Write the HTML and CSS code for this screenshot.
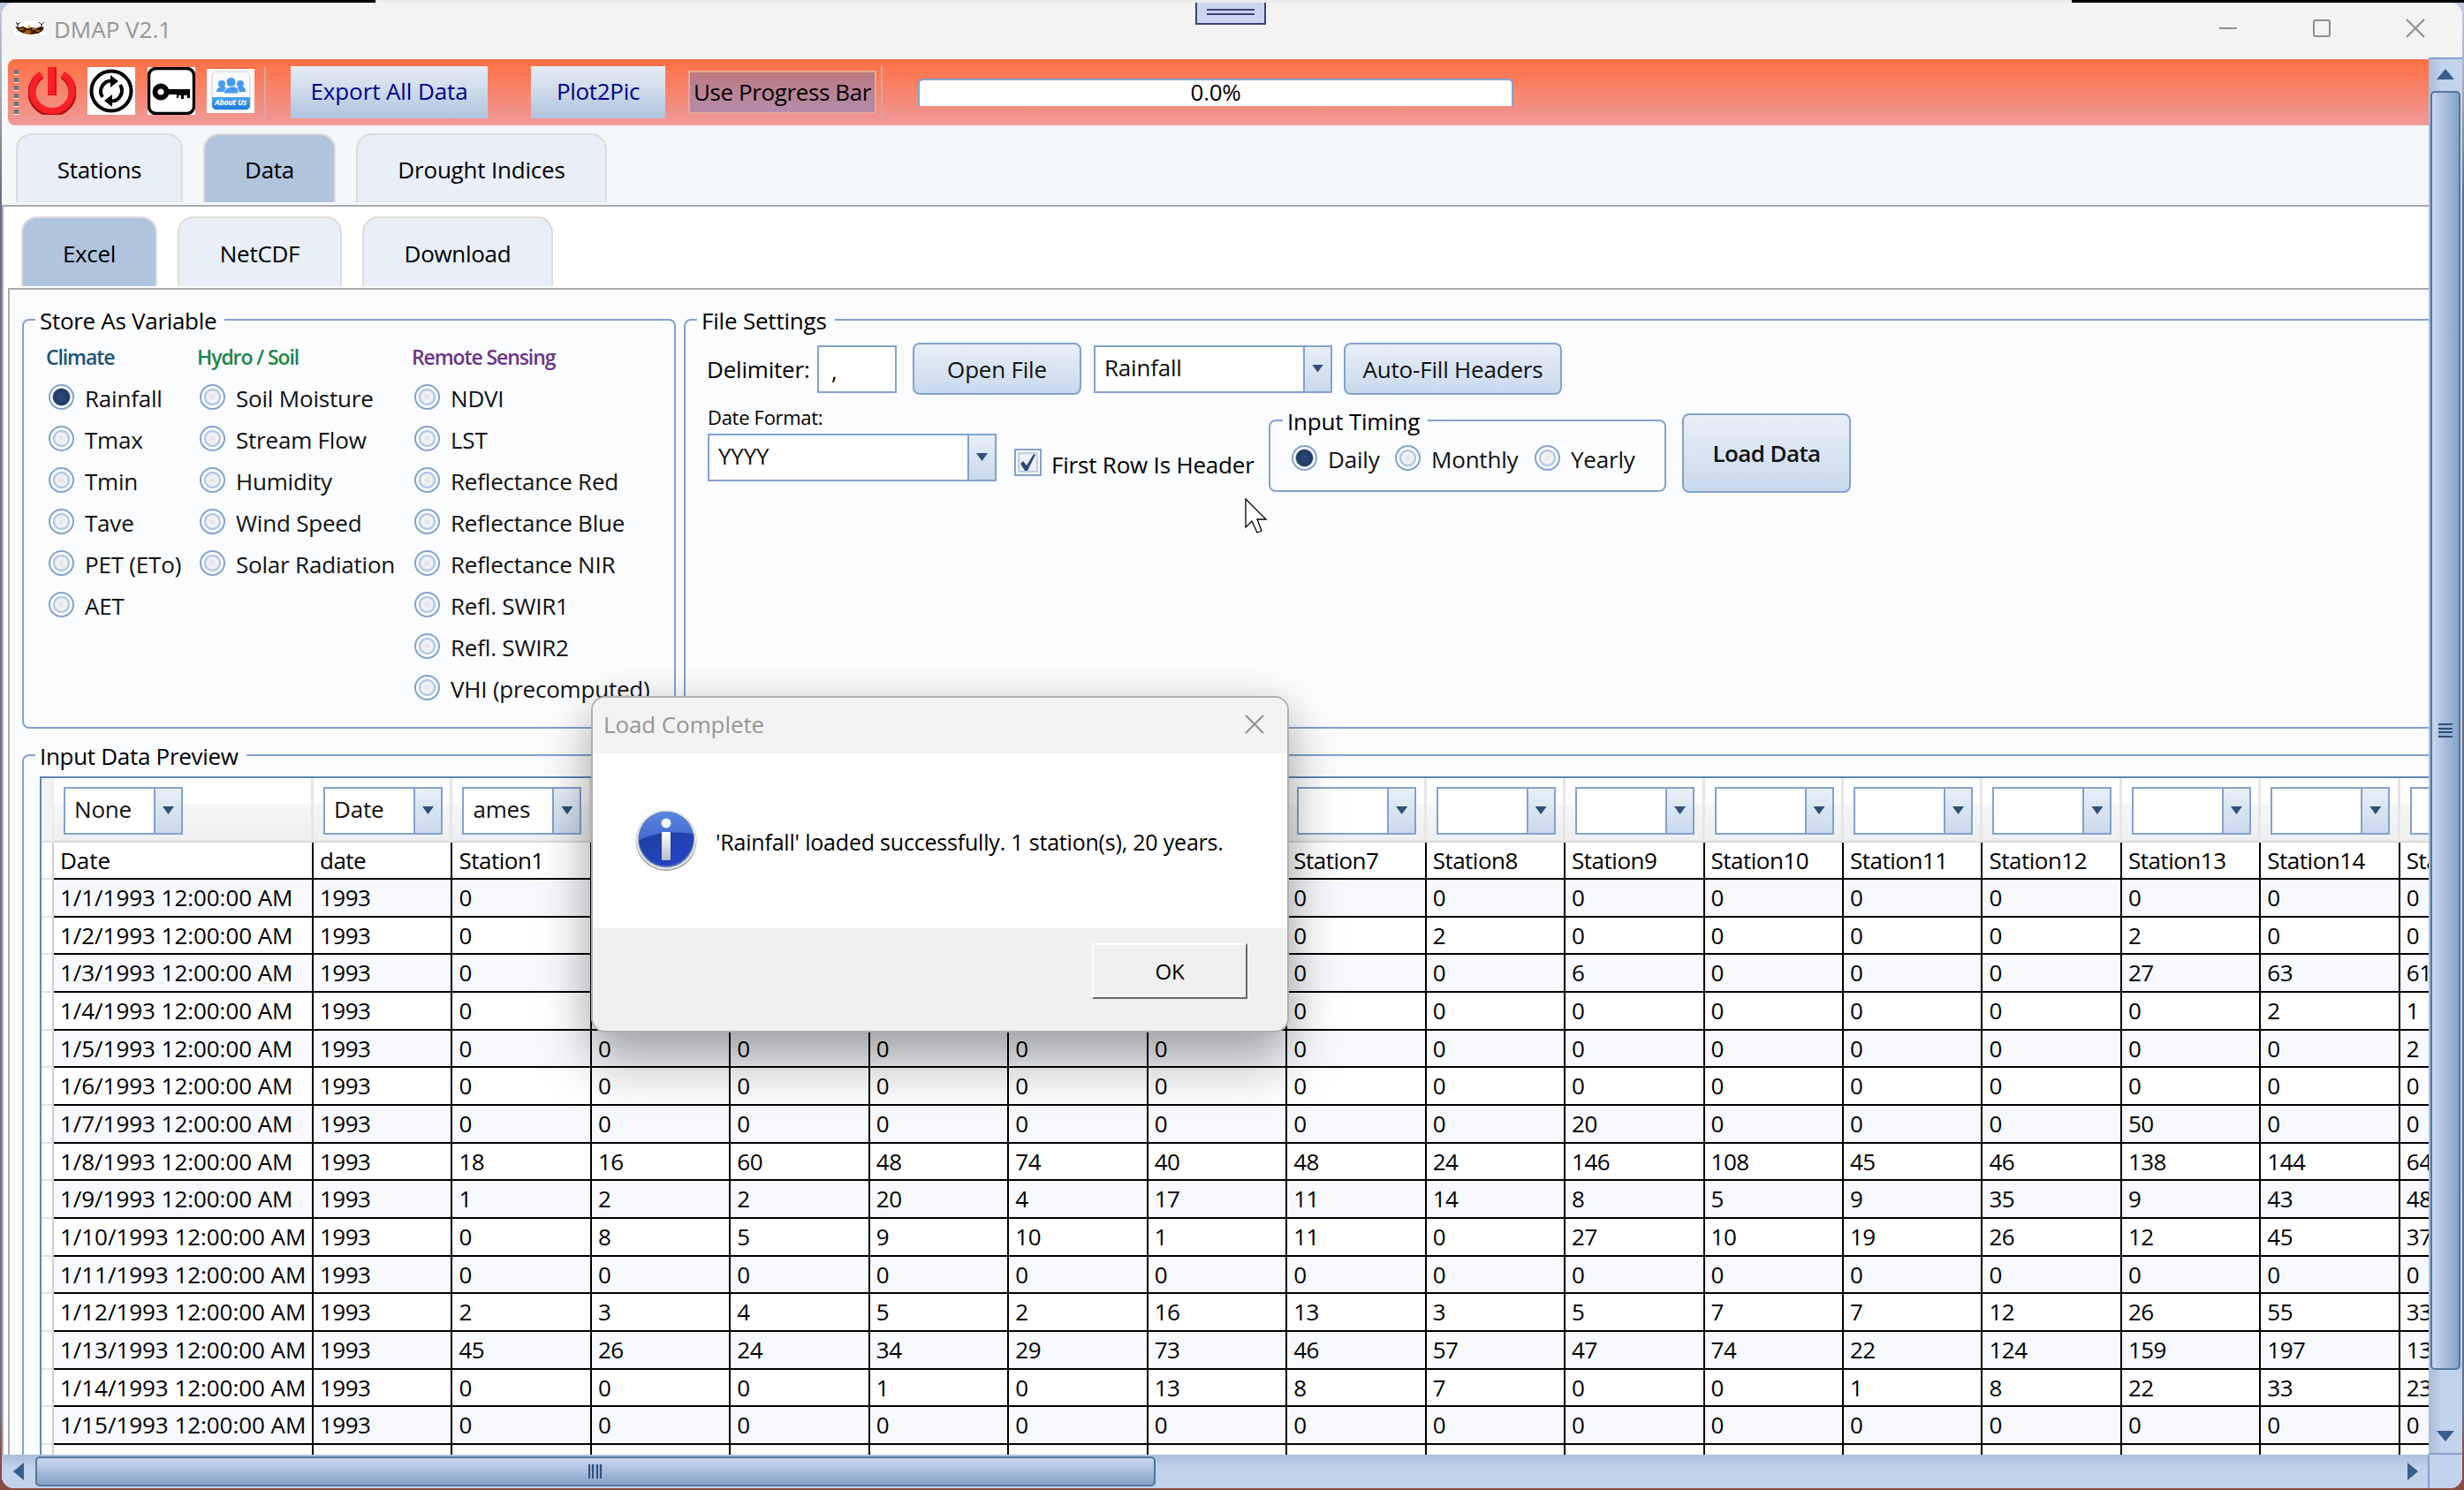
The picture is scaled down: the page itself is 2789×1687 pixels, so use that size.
FILE: index.html
```
<!DOCTYPE html>
<html>
	<head>
		<meta charset="utf-8" />
		<title>DMAP V2.1</title>
		<link rel="stylesheet" href="styles.css">
		<script src="table.js"></script>
	</head>
	<body>
		<div class="desktop-top"></div>
		<div class="window">
			<div class="titlebar">
				<svg class="app-icon" viewBox="0 0 36 16">
					<rect width="36" height="16" fill="#fff"/>
					<path d="M1 6l5 1 4-1 5 2 5-1 5 1 5-2 4 1-2 4-5 3-8 1-8-1-6-3z" fill="#3a1d06"/>
					<path d="M6 9h5M13 11h6M20 9h5M25 11h4M11 13h8" stroke="#c86f1c" stroke-width="1.6"/>
					<path d="M4 8V2M2 1l2 3 3-3M31 8V3M28 1l3 3 3-3" stroke="#2a1a10" fill="none"/>
					<circle cx="17" cy="6" r="1.6" fill="#f0a51e"/>
				</svg>
				<span class="title">DMAP V2.1</span>
				<div class="win-btns">
					<svg viewBox="0 0 22 22"><path d="M1 11h20"/></svg>
					<svg viewBox="0 0 22 22"><rect x="2" y="2" width="18" height="18" rx="2"/></svg>
					<svg viewBox="0 0 22 22"><path d="M1 1l20 20M21 1L1 21"/></svg>
				</div>
			</div>

			<div class="main">
				<div class="client">
					<div class="toolbar">
						<div class="grip"></div>
						<svg class="ico power" viewBox="0 0 54 54">
							<path d="M15 9A23 23 0 1 0 39 9" fill="none" stroke="#b51218" stroke-width="9"/>
							<path d="M15 8A22.500 22.500 0 1 0 39 8" fill="none" stroke="#fb2026" stroke-width="7"/>
							<rect x="22" y="0" width="10" height="32" fill="#d5141b"/>
							<rect x="22" y="0" width="8" height="31" fill="#fb2026"/>
						</svg>
						<svg class="ico refresh" viewBox="0 0 54 54">
							<rect width="54" height="54" fill="#fff"/>
							<circle cx="27" cy="27" r="22.500" fill="none" stroke="#000" stroke-width="4"/>
							<path d="M17 34A12 12 0 0 1 27 15.500M37 20A12 12 0 0 1 27 38.500" fill="none" stroke="#000" stroke-width="4"/>
							<path d="M26 9l9 7-9 7zM28 31l-9 7 9 7z"/>
						</svg>
						<svg class="ico key" viewBox="0 0 54 54">
							<rect width="54" height="54" fill="#fff"/>
							<rect x="1.500" y="1.500" width="51" height="51" rx="8" fill="#fff" stroke="#000" stroke-width="3.500"/>
							<circle cx="15" cy="28" r="6.500" fill="none" stroke="#000" stroke-width="6"/>
							<path d="M22 25h26v10h-3v-3h-4v4h-3v-4h-3v3h-2v-4H22z"/>
						</svg>
						<svg class="ico about" viewBox="0 0 54 50">
							<defs>
								<linearGradient id="ab" x1="0" y1="0" x2="0" y2="1">
									<stop offset="0" stop-color="#4ea3f2"/>
									<stop offset="1" stop-color="#1a7ce0"/>
								</linearGradient>
							</defs>
							<rect width="54" height="50" fill="#fff"/>
							<rect x="6" y="3" width="43" height="43" rx="5" fill="#f8fafc" stroke="#c8ccd2"/>
							<path d="M6 32h43v9q0 5-5 5H11q-5 0-5-5z" fill="url(#ab)"/>
							<g fill="#469af0">
								<circle cx="17" cy="17" r="4"/><circle cx="38" cy="17" r="4"/>
								<path d="M11 26q0-5 6-6t6 6zM32 26q0-5 6-6t6 6z"/>
								<circle cx="27.500" cy="15" r="5.500" stroke="#f8fafc"/>
								<path d="M19 28q0-6 8.500-8t8.500 8z" stroke="#f8fafc"/>
							</g>
							<text x="27" y="41" class="about-txt">About Us</text>
						</svg>
						<i class="sep sep1"></i>
						<button class="tool-btn export">Export All Data</button>
						<button class="tool-btn plot">Plot2Pic</button>
						<button class="toggle">Use Progress Bar</button>
						<i class="sep sep2"></i>
						<div class="progress">0.0%</div>
					</div>

					<div class="tabs tabs-outer">
						<div class="tab t-stations">Stations</div>
						<div class="tab t-data active">Data</div>
						<div class="tab t-drought">Drought Indices</div>
					</div>

					<div class="panel outer">
						<div class="tabs tabs-inner">
							<div class="tab t-excel active">Excel</div>
							<div class="tab t-netcdf">NetCDF</div>
							<div class="tab t-download">Download</div>
						</div>
						<div class="panel inner">
							<div class="groups">
								<fieldset class="store">
									<legend>Store As Variable</legend>
									<div class="vars">
										<div class="col">
											<h4 class="climate">Climate</h4>
											<label><i class="radio on"></i>Rainfall</label>
											<label><i class="radio"></i>Tmax</label>
											<label><i class="radio"></i>Tmin</label>
											<label><i class="radio"></i>Tave</label>
											<label><i class="radio"></i>PET (ETo)</label>
											<label><i class="radio"></i>AET</label>
										</div>
										<div class="col">
											<h4 class="hydro">Hydro / Soil</h4>
											<label><i class="radio"></i>Soil Moisture</label>
											<label><i class="radio"></i>Stream Flow</label>
											<label><i class="radio"></i>Humidity</label>
											<label><i class="radio"></i>Wind Speed</label>
											<label><i class="radio"></i>Solar Radiation</label>
										</div>
										<div class="col">
											<h4 class="remote">Remote Sensing</h4>
											<label><i class="radio"></i>NDVI</label>
											<label><i class="radio"></i>LST</label>
											<label><i class="radio"></i>Reflectance Red</label>
											<label><i class="radio"></i>Reflectance Blue</label>
											<label><i class="radio"></i>Reflectance NIR</label>
											<label><i class="radio"></i>Refl. SWIR1</label>
											<label><i class="radio"></i>Refl. SWIR2</label>
											<label><i class="radio"></i>VHI (precomputed)</label>
										</div>
									</div>
								</fieldset>

								<fieldset class="settings">
									<legend>File Settings</legend>
									<div class="row1">
										<span class="delim-label">Delimiter:</span>
										<div class="textbox">,</div>
										<button class="btn open">Open File</button>
										<div class="combo var-combo"><span>Rainfall</span><b></b></div>
										<button class="btn autofill">Auto-Fill Headers</button>
									</div>
									<div class="row2">
										<div class="date-format">
											<span>Date Format:</span>
											<div class="combo"><span>YYYY</span><b></b></div>
										</div>
										<div class="check">
											<svg viewBox="0 0 31 31">
												<rect x="1" y="1" width="29" height="29" fill="#fff" stroke="#84a2cb" stroke-width="2"/>
												<rect x="5" y="5" width="21" height="21" fill="#eef0f3" stroke="#bccfe8" stroke-width="2"/>
												<path d="M7 17l3-3 4 5 8-13 2 1-9 18h-3z" fill="#2b4a75"/>
											</svg>
											<span>First Row Is Header</span>
										</div>
										<fieldset class="timing">
											<legend>Input Timing</legend>
											<div class="timing-row">
												<label class="daily"><i class="radio on"></i>Daily</label>
												<label class="monthly"><i class="radio"></i>Monthly</label>
												<label class="yearly"><i class="radio"></i>Yearly</label>
											</div>
										</fieldset>
										<button class="btn load">Load Data</button>
									</div>
								</fieldset>
							</div>

							<fieldset class="preview">
								<legend>Input Data Preview</legend>
								<div class="grid" id="grid"></div>
							</fieldset>
						</div>
					</div>
				</div>

				<div class="vscroll">
					<i class="arrow up"></i>
					<div class="thumb"><i></i></div>
					<i class="arrow down"></i>
				</div>
			</div>

			<div class="hscroll">
				<i class="arrow left"></i>
				<div class="thumb"><i></i></div>
				<i class="arrow right"></i>
				<div class="corner"></div>
			</div>
		</div>

		<div class="dock"><i></i><i></i></div>

		<svg class="cursor" viewBox="0 0 26 42">
			<path d="M1 1v32l7-7 6 13 5-2-5-13h10z" fill="#fff" stroke="#000" stroke-width="1.300"/>
		</svg>

		<div class="dialog">
			<div class="dlg-head">
				<span>Load Complete</span>
				<svg viewBox="0 0 22 22"><path d="M1 1l20 20M21 1L1 21"/></svg>
			</div>
			<div class="dlg-body">
				<svg class="info" viewBox="0 0 72 72">
					<defs>
						<linearGradient id="g1" x1="0" y1="0" x2="0" y2="1">
							<stop offset="0" stop-color="#5b86e0"/>
							<stop offset="1" stop-color="#2b50c4"/>
						</linearGradient>
						<linearGradient id="g2" x1="0" y1="0" x2="1" y2="1">
							<stop offset="0" stop-color="#1e409c"/>
							<stop offset="1" stop-color="#2443cc"/>
						</linearGradient>
						<linearGradient id="g3" x1="0" y1="0" x2="0" y2="1">
							<stop offset="0" stop-color="#fff"/>
							<stop offset="1" stop-color="#b9bdc8"/>
						</linearGradient>
					</defs>
					<circle cx="36" cy="36.500" r="34.500" fill="#999"/>
					<circle cx="36" cy="35.500" r="34" fill="#ececec"/>
					<circle cx="36" cy="35.500" r="32" fill="#8b93a8"/>
					<circle cx="36" cy="35" r="31" fill="url(#g1)"/>
					<path d="M5 37Q26 24 67 29A31 31 0 1 1 5 37z" fill="url(#g2)"/>
					<circle cx="36" cy="17" r="5.500" fill="#f4f6fb"/>
					<rect x="31" y="27" width="10" height="32" rx="1" fill="url(#g3)"/>
				</svg>
				<span>'Rainfall' loaded successfully. 1 station(s), 20 years.</span>
			</div>
			<div class="dlg-foot"><button>OK</button></div>
		</div>

		<script>
			drawGrid(document.getElementById("grid"));
		</script>
	</body>
</html>
```
FILE: table.js
```
//first row holds the header names, the rest are daily values
//columns 2-6 of the first rows stay empty, the message box lies over them
var names = ["Station1","","","","","","Station7","Station8","Station9","Station10","Station11","Station12","Station13","Station14","Station15"];

var values = [
	["0","","","","","","0","0","0","0","0","0","0","0","0"],
	["0","","","","","","0","2","0","0","0","0","2","0","0"],
	["0","","","","","","0","0","6","0","0","0","27","63","61"],
	["0","","","","","","0","0","0","0","0","0","0","2","1"],
	[0,0,0,0,0,0,0,0,0,0,0,0,0,0,2],
	[0,0,0,0,0,0,0,0,0,0,0,0,0,0,0],
	[0,0,0,0,0,0,0,0,20,0,0,0,50,0,0],
	[18,16,60,48,74,40,48,24,146,108,45,46,138,144,64],
	[1,2,2,20,4,17,11,14,8,5,9,35,9,43,48],
	[0,8,5,9,10,1,11,0,27,10,19,26,12,45,37],
	[0,0,0,0,0,0,0,0,0,0,0,0,0,0,0],
	[2,3,4,5,2,16,13,3,5,7,7,12,26,55,33],
	[45,26,24,34,29,73,46,57,47,74,22,124,159,197,13],
	[0,0,0,1,0,13,8,7,0,0,1,8,22,33,23],
	[0,0,0,0,0,0,0,0,0,0,0,0,0,0,0]
];

function addRow(grid, cls, cells){
	var row = document.createElement("div");
	row.className = "grow " + cls;
	row.innerHTML = '<div class="rh"></div>';
	for( var i = 0; i < cells.length; i++ ){
		var cell = document.createElement("div");
		cell.className = "cell";
		cell.innerHTML = cells[i];
		row.appendChild(cell);
	}
	grid.appendChild(row);
}

function drawGrid(grid){
	var heads = ["None","Date","ames"];
	var combos = [];
	for( var i = 0; i < 17; i++ ){
		combos.push('<div class="combo"><span>' + (heads[i] || "") + '</span><b></b></div>');
	}
	addRow(grid, "ghead", combos);
	addRow(grid, "gnames", ["Date","date"].concat(names));

	for( var i = 0; i < values.length; i++ ){
		addRow(grid, i % 2 ? "" : "alt", ["1/" + (i+1) + "/1993 12:00:00 AM", "1993"].concat(values[i]));
	}

	var blank = [];
	for( var i = 0; i < 17; i++ ){
		blank.push("");
	}
	addRow(grid, "", blank);
}
```
FILE: styles.css
```
*{
	margin: 0;
	padding: 0;
	box-sizing: border-box;
}
body{
	width: 2789px;
	height: 1687px;
	overflow: hidden;
	position: relative;
	background: linear-gradient(#c3c9e4 0, #a9a9b5 100px, #6b6c86 220px, #6d6f88 1600px, #8b4a42 1650px, #8b4a42);
	color: #000;
	font: 26px/36px "Open Sans", "Noto Sans", sans-serif;
	letter-spacing: -0.3px;
	white-space: nowrap;
}
button{
	font: inherit;
	letter-spacing: inherit;
	color: inherit;
}
i, b{
	display: block;
	flex: none;
}
.desktop-top{
	height: 3px;
	background: linear-gradient(90deg, #000 425px, #ebebeb 425px, #ebebeb 2345px, #000 2345px);
}
.window{
	width: 2785px;
	height: 1682px;
	margin-left: 2px;
	border-radius: 14px;
	overflow: hidden;
	background: #f4f8fb;
}

/* title bar */
.titlebar{
	height: 62px;
	padding: 0 43px 0 14px;
	display: flex;
	align-items: center;
	background: #f3f3f3;
	color: #969696;
}
.app-icon{
	width: 36px;
	height: 16px;
	margin: -4px 9px 0 0;
}
.title{
	margin-top: -2px;
	letter-spacing: 0;
}
.win-btns{
	display: flex;
	gap: 84px;
	margin: -4px -1px 0 auto;
}
.win-btns svg, .dlg-head svg{
	width: 22px;
	height: 22px;
	fill: none;
	stroke: #8e8e8e;
	stroke-width: 2;
}

.main{
	display: flex;
	height: 1582px;
}
.client{
	width: 2747px;
	overflow: hidden;
}

/* toolbar */
.toolbar{
	height: 75px;
	margin: 2px 0 0 7px;
	padding-left: 7px;
	display: flex;
	align-items: center;
	border-radius: 8px 0 0 8px;
	background: linear-gradient(#ff7043, #ef9a9a);
}
.grip{
	width: 5px;
	height: 52px;
	background: repeating-linear-gradient(#6c7680 0, #6c7680 5px, #fff 5px, #fff 6px, transparent 6px, transparent 9px);
}
.ico{
	width: 54px;
	height: 54px;
	margin-top: -3px;
	flex: none;
}
.power{ margin-left: 11px; }
.refresh{ margin-left: 13px; }
.key{ margin-left: 14px; }
.about{ margin-left: 13px; height: 50px; }
.about-txt{
	font: italic bold 9px "Open Sans", sans-serif;
	text-anchor: middle;
	letter-spacing: -0.3px;
	fill: #fff;
}
.sep{
	width: 2px;
	height: 59px;
	background: #cfa9a8;
}
.sep1{ margin-left: 11px; }
.sep2{ margin-left: 5px; }
.tool-btn{
	height: 59px;
	padding-bottom: 3px;
	border: none;
	background: linear-gradient(#e6eef6, #b0c4de);
	color: #00008b;
}
.export{
	width: 223px;
	margin-left: 28px;
	letter-spacing: -0.1px;
}
.plot{
	width: 152px;
	margin-left: 49px;
}
.toggle{
	width: 213px;
	height: 49px;
	margin-left: 26px;
	padding-bottom: 2px;
	border: 2px solid #eaa898;
	background: linear-gradient(#bc7a80, #b58cab);
	letter-spacing: -0.4px;
}
.progress{
	width: 674px;
	height: 31px;
	margin: -1px 0 0 40px;
	border: 2px solid #84a2cb;
	border-width: 2px 2px 0;
	border-radius: 6px 6px 0 0;
	background: #fff;
	text-align: center;
	line-height: 27px;
}

/* tabs */
.tabs{
	display: flex;
	align-items: flex-end;
}
.tab{
	height: 78px;
	display: flex;
	align-items: center;
	justify-content: center;
	padding-top: 2px;
	border: 2px solid #dcdcdc;
	border-bottom: none;
	border-radius: 18px 18px 0 0;
	background: #e8eff7;
	margin-right: 23px;
}
.tab.active{
	background: #b0c4de;
}
.tabs-outer{
	margin-top: 9px;
	padding-left: 16px;
}
.t-stations{ width: 189px; }
.t-data{ width: 150px; }
.t-drought{ width: 284px; letter-spacing: -0.2px; }
.tabs-inner{
	padding: 11px 0 0 20px;
}
.t-excel{ width: 154px; }
.t-netcdf{ width: 186px; }
.t-download{ width: 216px; }
.tabs-inner .tab{ height: 79px; }

.panel{
	border-top: 2px solid #ababab;
	border-left: 2px solid #ababab;
}
.outer{
	height: 1420px;
	margin-top: 3px;
	background: #fff;
}
.inner{
	height: 1330px;
	margin: 2px 0 0 5px;
	padding: 16px 0 0 14px;
	background: #fafcfe;
}

/* group boxes */
fieldset{
	border: 2px solid #84a2cb;
	border-radius: 8px;
	padding: 0 0 0 13px;
	flex: none;
}
legend{
	height: 36px;
	padding: 1px 9px 0 5px;
}
.groups{
	display: flex;
	gap: 9px;
}
.store, .settings{
	height: 481px;
}
.store{ width: 740px; }
.settings{ width: 2100px; letter-spacing: -0.2px; }

.vars{
	display: grid;
	grid-template-columns: 171px 243px auto;
	padding: 8px 0 0 12px;
}
h4{
	height: 38px;
	font-size: 23px;
	font-weight: 600;
	line-height: 33px;
	letter-spacing: -1.1px;
}
.climate{ color: #1a5276; }
.hydro{ color: #1e8449; }
.remote{ color: #6c3483; }
label{
	display: flex;
	align-items: center;
	color: #111;
	letter-spacing: -0.2px;
}
.col label{
	height: 47.1px;
	padding: 2px 0 0 3px;
}
.radio{
	width: 29px;
	height: 29px;
	margin: -3px 12px 0 0;
	border: 2px solid #84a2cb;
	border-radius: 50%;
	background: radial-gradient(circle, #e4e4e6 0, #f5f5f6 6px, #b9cdea 8px, #a5bde0 9px, #fff 10px);
}
.radio.on{
	background: radial-gradient(circle, #2b4a75 0, #1f3a63 9px, #fff 10.500px);
}

.row1{
	display: flex;
	align-items: center;
	height: 59px;
	margin: 8px 0 0 11px;
}
.delim-label{ width: 125px; padding-top: 1px; }
.textbox{
	width: 90px;
	height: 54px;
	padding: 9px 14px;
	border: 2px solid #84a2cb;
	background: #fff;
}
.btn{
	border: 2px solid #84a2cb;
	border-radius: 8px;
	background: linear-gradient(#e8eff8, #c9d9ec);
	color: #111;
	height: 59px;
}
.open{
	width: 191px;
	margin: 0 14px 0 18px;
}
.autofill{
	width: 247px;
	margin-left: 13px;
}
.combo{
	display: flex;
	height: 54px;
	border: 2px solid #84a2cb;
	background: #fff;
}
.combo span{
	flex: 1;
	padding-left: 10px;
	line-height: 47px;
	color: #111;
}
.combo b{
	width: 31px;
	border-left: 2px solid #84a2cb;
	background: linear-gradient(#e8eff8, #c9d9ec);
}
.combo b::after{
	content: "";
	display: block;
	margin: 20px 0 0 8px;
	width: 13px;
	height: 9px;
	background: #2f5079;
	clip-path: polygon(0 0, 100% 0, 50% 100%);
}
.var-combo{ width: 270px; }

.row2{
	display: flex;
	align-items: flex-start;
	margin: 11px 0 0 11px;
}
.date-format{
	width: 327px;
	margin-left: 1px;
}
.date-format > span{
	display: block;
	height: 33px;
	font-size: 22px;
	line-height: 28px;
	letter-spacing: -0.3px;
}
.check{
	display: flex;
	align-items: center;
	margin: 47px 0 0 20px;
	width: 288px;
}
.check svg{
	width: 31px;
	height: 31px;
	margin: -3px 11px 0 0;
}
.check span{ margin-top: 3px; }
.timing{
	width: 450px;
	height: 99px;
	padding-left: 14px;
}
.timing-row{
	display: flex;
	height: 51px;
	padding-left: 10px;
}
.daily{ width: 117px; }
.monthly{ width: 158px; }
.load{
	width: 191px;
	height: 90px;
	margin: 10px 0 0 18px;
	font-weight: 600;
	letter-spacing: -0.6px;
}

/* preview grid */
.preview{
	width: 2900px;
	height: 900px;
	margin-top: 12px;
}
.grid{
	margin: 6px 0 0 5px;
	border: 2px solid #5e8ab4;
	background: #fff;
	letter-spacing: -0.5px;
}
.grow{
	display: flex;
	height: 42.67px;
}
.gnames{ height: 42px; }
.rh{
	width: 14px;
	flex: none;
	border-right: 2px solid #d0d0d4;
	border-bottom: 2px solid #e2e2e6;
}
.cell{
	width: 157.46px;
	flex: none;
	padding-left: 7px;
	border-right: 2px solid #000;
	border-bottom: 2px solid #000;
	line-height: 41px;
}
.rh + .cell{
	width: 294px;
	letter-spacing: -0.05px;
}
.alt .cell{ background: #f7f9fd; }
.ghead{ height: 73px; }
.ghead .rh{ border-right-color: #ececee; background: #f2f2f4; }
.ghead .cell{
	padding: 10px 0 0 11px;
	border-right: 3px solid #e6e6e8;
	border-bottom: 2px solid #d8d8da;
	background: linear-gradient(#fff 29px, #f5f6f8 30px, #eeeff1);
}
.ghead .combo{ width: 135px; }
.ghead .combo span{ letter-spacing: -0.2px; }

/* scroll bars */
.vscroll{
	width: 38px;
	display: flex;
	flex-direction: column;
	align-items: center;
	padding-bottom: 13px;
	border-top: 2px solid #84a2cb;
	border-bottom: 2px solid #84a2cb;
	background: linear-gradient(90deg, #a9bcda, #c2d3ec 40%);
}
.thumb{
	display: flex;
	align-items: center;
	justify-content: center;
	border: 2px solid #54779f;
	border-radius: 5px;
}
.vscroll .thumb{
	width: 34px;
	height: 1448px;
	margin: 13px 0 auto;
	background: linear-gradient(90deg, #c2d3ec 10%, #86a1c8);
}
.vscroll .thumb i{
	width: 16px;
	height: 16px;
	background: repeating-linear-gradient(#2f5079 0, #2f5079 2px, #9db4d6 2px, #9db4d6 4.500px);
}
.arrow{ background: #3a5e8c; }
.up, .down{
	width: 20px;
	height: 12px;
}
.up{
	margin-top: 11px;
	clip-path: polygon(50% 0, 100% 100%, 0 100%);
}
.down{ clip-path: polygon(0 0, 100% 0, 50% 100%); }
.left, .right{
	width: 12px;
	height: 20px;
}
.left{
	margin-left: 13px;
	clip-path: polygon(0 50%, 100% 0, 100% 100%);
}
.right{
	margin: 0 11px 0 auto;
	clip-path: polygon(0 0, 100% 50%, 0 100%);
}
.hscroll{
	height: 38px;
	display: flex;
	align-items: center;
	background: linear-gradient(#a9bcda, #c2d3ec 40%);
}
.hscroll .thumb{
	width: 1268px;
	height: 34px;
	margin-left: 13px;
	background: linear-gradient(#c2d3ec 10%, #86a1c8);
}
.hscroll .thumb i{
	width: 16px;
	height: 16px;
	background: repeating-linear-gradient(90deg, #2f5079 0, #2f5079 2px, #9db4d6 2px, #9db4d6 4.500px);
}
.corner{
	width: 39px;
	height: 38px;
	border-left: 2px solid #84a2cb;
	background: #c2d3ec;
}

/* docked handle at the top edge */
.dock{
	position: absolute;
	left: 1353px;
	top: 3px;
	width: 80px;
	height: 25px;
	padding: 7px 11px;
	border: 2px solid #3b4474;
	border-top: none;
	background: #ccd5f0;
}
.dock i{
	height: 2px;
	margin-bottom: 3px;
	background: #3b4474;
}
.cursor{
	position: absolute;
	left: 1409px;
	top: 564px;
	width: 26px;
	height: 42px;
}

/* message box */
.dialog{
	position: absolute;
	left: 669px;
	top: 788px;
	width: 790px;
	height: 381px;
	border: 2px solid #b0b0b0;
	border-radius: 16px;
	overflow: hidden;
	background: #f0f0f0;
	box-shadow: 0 36px 64px rgba(0,0,0,.3), 0 4px 40px rgba(0,0,0,.12);
}
.dlg-head{
	height: 63px;
	padding: 0 26px 4px 12px;
	display: flex;
	align-items: center;
	justify-content: space-between;
	background: #f3f3f3;
	color: #969696;
	letter-spacing: -0.1px;
}
.dlg-body{
	height: 198px;
	padding: 2px 0 0 47px;
	display: flex;
	align-items: center;
	background: #fff;
}
.info{
	width: 72px;
	height: 72px;
	margin: -4px 20px 0 0;
}
.dlg-foot{
	padding: 17px 45px 0 0;
	display: flex;
	justify-content: flex-end;
}
.dlg-foot button{
	width: 176px;
	height: 63px;
	border: 2px solid;
	border-color: #fff #696969 #696969 #fff;
	background: #f0f0f0;
	font-size: 24px;
}
.dlg-body span{
	font-size: 25px;
	letter-spacing: -0.2px;
}
```
